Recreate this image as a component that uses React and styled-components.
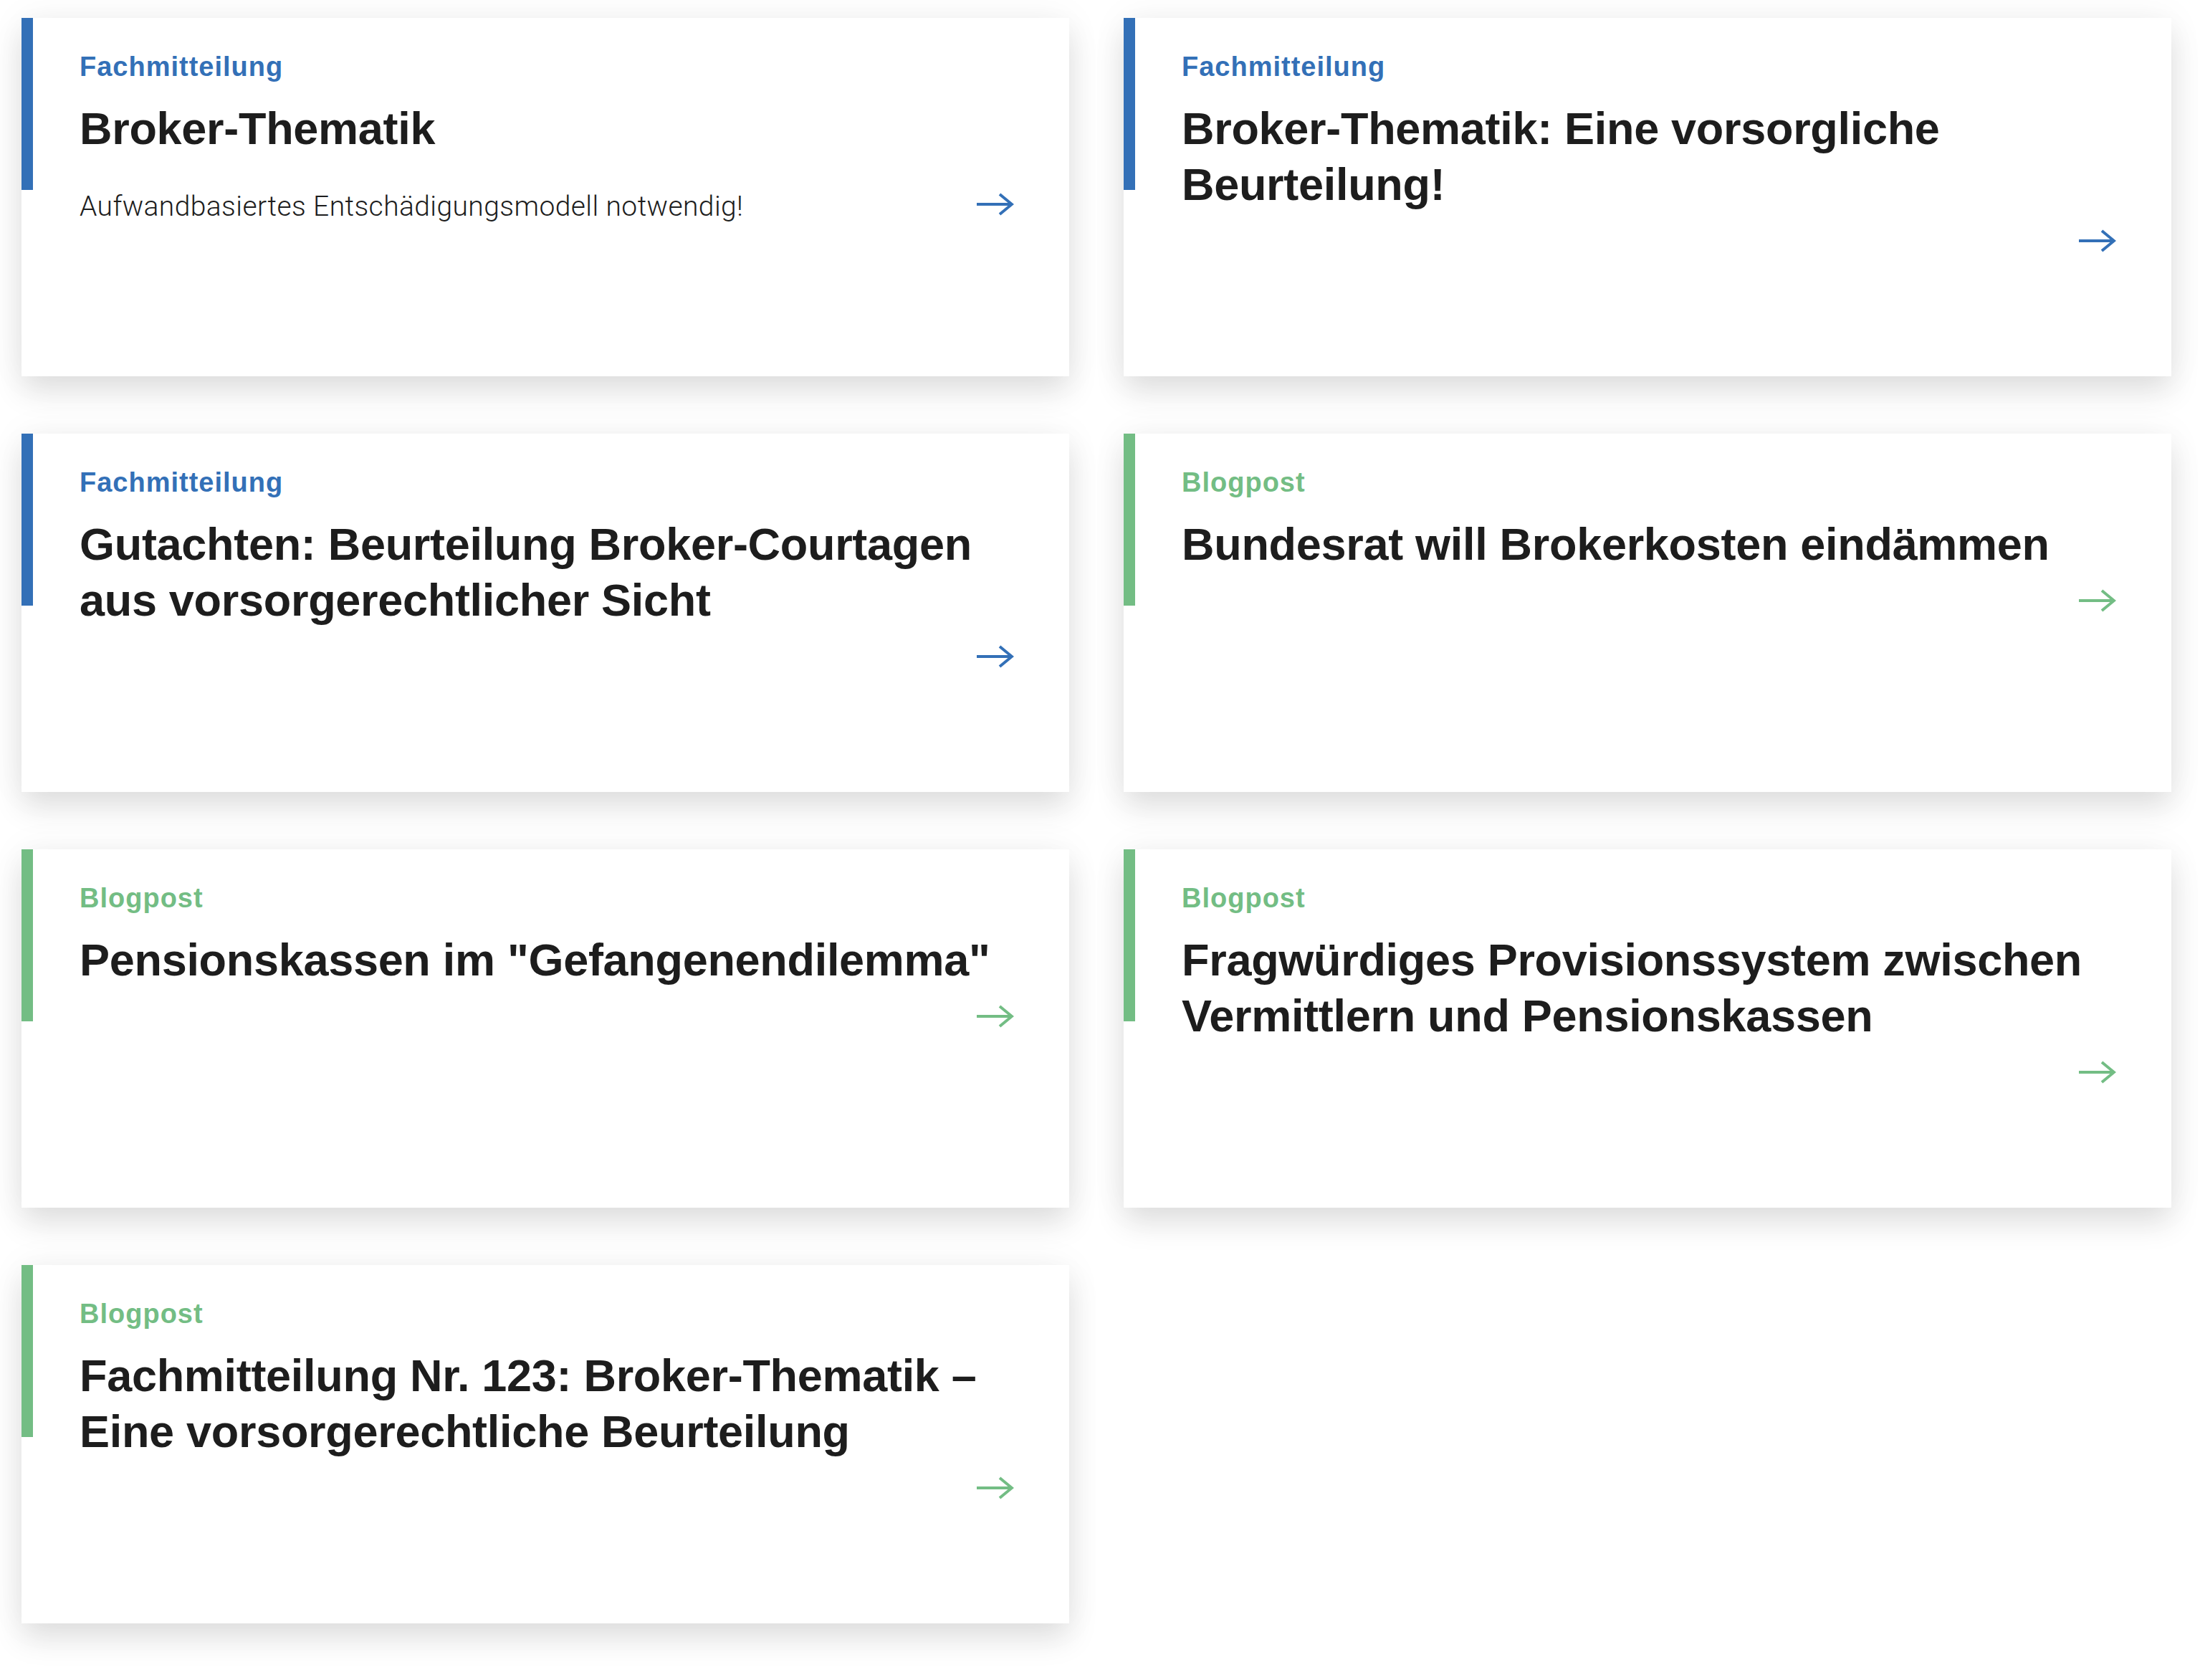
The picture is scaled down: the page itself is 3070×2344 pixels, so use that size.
import React from 'react';
import styled, { createGlobalStyle } from 'styled-components';

const GlobalStyle = createGlobalStyle`
    body {
        margin: 0;
        background: #ffffff;
        font-family: "Liberation Sans", Arial, sans-serif;
        color: #1d1d1d;
    }
`

const colors = {
    fach: '#3370b7',
    blog: '#73bd84',
}

const Grid = styled.div`
    display: grid;
    grid-template-columns: 1462px 1462px;
    column-gap: 76px;
    row-gap: 80px;
    padding: 25px 40px 78px 30px;
`

const Card = styled.a`
    display: flex;
    min-height: 500px;
    background: #ffffff;
    box-shadow: 0 22px 40px rgba(0, 0, 0, 0.11), 0 0 50px rgba(0, 0, 0, 0.05);
    text-decoration: none;
    color: inherit;
`

const Accent = styled.div`
    flex-shrink: 0;
    width: 16px;
    height: 240px;
    background: ${p => p.$color};
`

const Body = styled.div`
    flex: 1;
    display: flex;
    flex-direction: column;
    padding: 45px 48px 40px 65px;
`

const Label = styled.span`
    font-size: 38px;
    line-height: 46px;
    font-weight: 700;
    letter-spacing: 1px;
    color: ${p => p.$color};
`

const Title = styled.h2`
    margin: 24px 0 0;
    font-size: 63px;
    line-height: 78px;
    font-weight: 700;
    letter-spacing: -0.3px;
    color: #1d1d1d;
`

const Footer = styled.div`
    display: flex;
    justify-content: space-between;
    align-items: baseline;
    margin-top: 24px;
    padding-right: 29px;
`

const Excerpt = styled.p`
    margin: 23px 0 0;
    font-family: Roboto, "Liberation Sans", sans-serif;
    font-weight: 300;
    font-size: 39px;
    line-height: 46px;
    letter-spacing: 0.4px;
    color: #1d1d1d;
`

const ArrowIcon = styled.svg`
    flex-shrink: 0;
    margin-left: auto;
    margin-bottom: -4px;
    width: 52px;
    height: 32px;
`

const Arrow = ({ color }) => (
    <ArrowIcon viewBox="0 0 52 32" fill="none" stroke={color} strokeWidth="4">
        <path d="M0 16 H49" />
        <path d="M32 2 L49 16 L32 30" />
    </ArrowIcon>
)

const posts = [
    {
        type: 'Fachmitteilung',
        title: 'Broker-Thematik',
        excerpt: 'Aufwandbasiertes Entschädigungsmodell notwendig!',
    },
    { type: 'Fachmitteilung', title: 'Broker-Thematik: Eine vorsorgliche Beurteilung!' },
    { type: 'Fachmitteilung', title: 'Gutachten: Beurteilung Broker-Courtagen aus vorsorgerechtlicher Sicht' },
    { type: 'Blogpost', title: 'Bundesrat will Brokerkosten eindämmen' },
    { type: 'Blogpost', title: 'Pensionskassen im "Gefangenendilemma"' },
    { type: 'Blogpost', title: 'Fragwürdiges Provisionssystem zwischen Vermittlern und Pensionskassen' },
    { type: 'Blogpost', title: 'Fachmitteilung Nr. 123: Broker-Thematik – Eine vorsorgerechtliche Beurteilung' },
]

const PostCard = ({ type, title, excerpt }) => {
    const color = type === 'Blogpost' ? colors.blog : colors.fach
    return (
        <Card href="#">
            <Accent $color={color} />
            <Body>
                <Label $color={color}>{type}</Label>
                <Title>{title}</Title>
                <Footer>
                    {excerpt && <Excerpt>{excerpt}</Excerpt>}
                    <Arrow color={color} />
                </Footer>
            </Body>
        </Card>
    )
}

export default function App() {
    return (
        <>
            <GlobalStyle />
            <Grid>
                {posts.map((post, i) => (
                    <PostCard key={i} {...post} />
                ))}
            </Grid>
        </>
    )
}
